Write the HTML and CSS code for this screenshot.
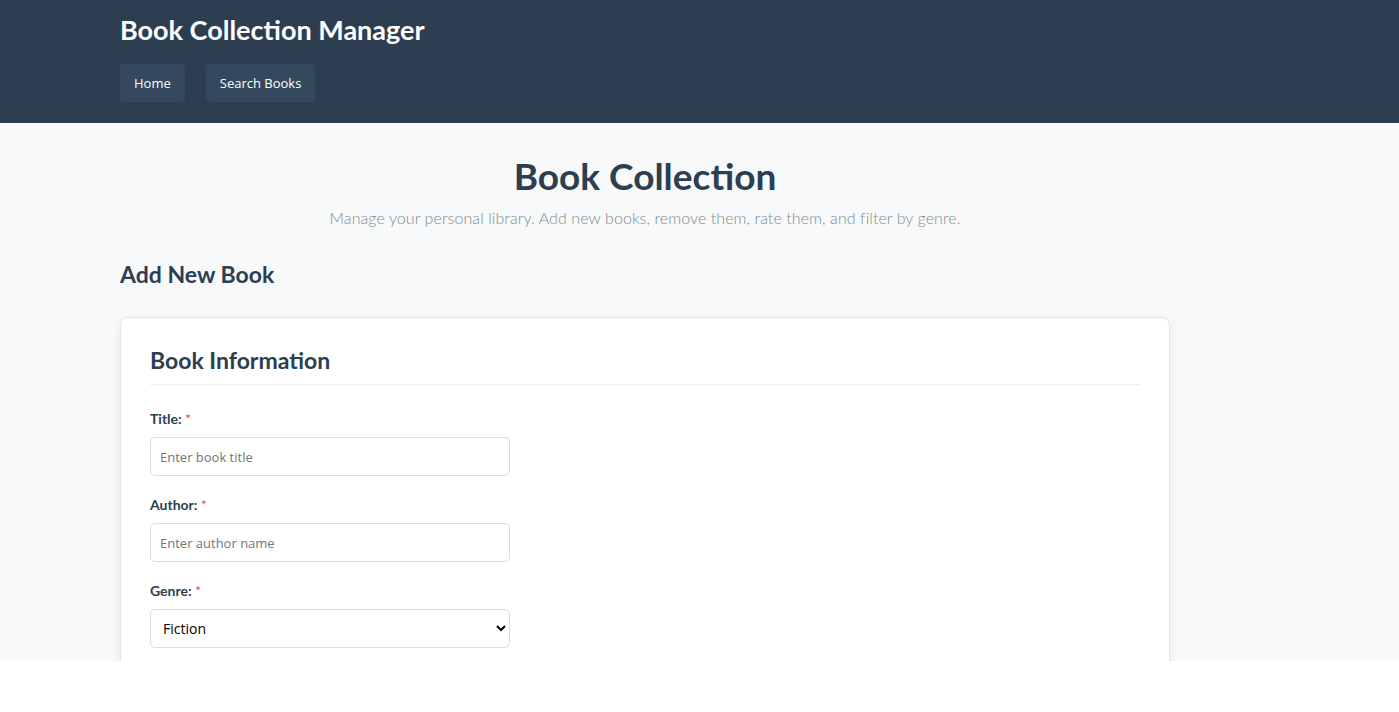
FILE: index.html
```html
<!DOCTYPE html>
<html lang="en">
<head>
<meta charset="utf-8">
<title>Book Collection Manager</title>
<link rel="stylesheet" href="styles.css">
</head>
<body>
<div class="page">
  <header class="site-header">
    <div class="container">
      <h1 class="brand">Book Collection Manager</h1>
      <nav class="nav">
        <a class="nav-btn" href="#">Home</a>
        <a class="nav-btn" href="#">Search Books</a>
      </nav>
    </div>
  </header>
  <main class="container main">
    <section class="intro">
      <h2 class="intro-title">Book Collection</h2>
      <p class="intro-sub">Manage your personal library. Add new books, remove them, rate them, and filter by genre.</p>
    </section>
    <h3 class="section-title">Add New Book</h3>
    <div class="card">
      <h4 class="card-title">Book Information</h4>
      <form class="form">
        <div class="form-group">
          <label class="label" for="title">Title: <span class="req">*</span></label>
          <input class="input" id="title" type="text" placeholder="Enter book title">
        </div>
        <div class="form-group">
          <label class="label" for="author">Author: <span class="req">*</span></label>
          <input class="input" id="author" type="text" placeholder="Enter author name">
        </div>
        <div class="form-group">
          <label class="label" for="genre">Genre: <span class="req">*</span></label>
          <select class="input select" id="genre">
            <option>Fiction</option>
            <option>Non-Fiction</option>
            <option>Mystery</option>
            <option>Science Fiction</option>
          </select>
        </div>
      </form>
    </div>
  </main>
</div>
</body>
</html>
```

FILE: styles.css
```css
* { box-sizing: border-box; }
html, body { margin: 0; padding: 0; background: #ffffff; }
body { font-family: Lato, "Open Sans", "Liberation Sans", sans-serif; color: #2c3e50; }

.page {
  height: 661px;
  overflow: hidden;
  background: #f7f9fa;
}

.container {
  width: 1050px;
  margin-left: 120px;
}

.site-header {
  background: #2c3e50;
  height: 123px;
  padding-top: 12px;
}

.brand {
  margin: 0;
  font-size: 27px;
  font-weight: 700;
  color: #ffffff;
  line-height: 36px;
}

.nav {
  display: flex;
  gap: 21px;
  margin-top: 16px;
}

.nav-btn {
  display: block;
  background: #34495e;
  color: #ffffff;
  text-decoration: none;
  font-family: "Open Sans", "Noto Sans", sans-serif;
  font-size: 13px;
  line-height: 18px;
  padding: 10px 14px;
  border-radius: 4px;
}

.intro {
  text-align: center;
  padding-top: 31px;
}

.intro-title {
  margin: 0;
  font-size: 37px;
  font-weight: 700;
  line-height: 44px;
  color: #2c3e50;
}

.intro-sub {
  margin: 10px 0 0;
  font-size: 16px;
  font-weight: 300;
  letter-spacing: 0.08px;
  color: #7f8c8d;
  line-height: 20px;
}

.section-title {
  margin: 32px 0 0;
  font-size: 23px;
  font-weight: 700;
  line-height: 28px;
}

.card {
  margin-top: 29px;
  background: #ffffff;
  border: 1px solid #e3e8ee;
  border-radius: 8px;
  box-shadow: 0 2px 8px rgba(0, 0, 0, 0.08);
  padding: 28px 29px 30px;
  height: 400px;
}

.card-title {
  margin: 0;
  padding-bottom: 10px;
  border-bottom: 1px solid #ecf0f1;
  font-size: 23px;
  font-weight: 700;
  line-height: 28px;
}

.form { margin-top: 25px; }

.form-group { margin-bottom: 20px; }

.label {
  display: block;
  font-size: 14px;
  font-weight: 700;
  line-height: 18px;
  margin-bottom: 9px;
  color: #2c3e50;
}

.req { color: #e74c3c; font-weight: 400; }

.input {
  display: block;
  width: 360px;
  height: 39px;
  border: 1px solid #dcdcdc;
  border-radius: 5px;
  background: #ffffff;
  padding: 0 9px;
  font-family: "Open Sans", "Noto Sans", sans-serif;
  font-size: 13px;
  color: #333;
}

.input::placeholder { color: #757575; }

.select {
  font-size: 14px;
  color: #000;
  padding-left: 8px;
}
```
